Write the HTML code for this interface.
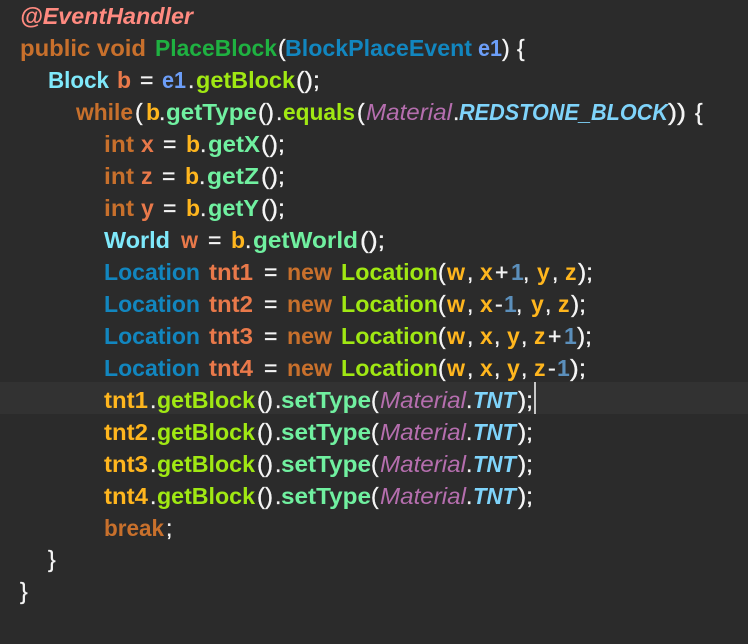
<!DOCTYPE html>
<html lang="en">
<head>
<meta charset="utf-8">
<title>Code</title>
<style>
html,body{margin:0;padding:0;background:#2b2b2b;width:748px;height:644px;overflow:hidden}
svg{display:block}
text{font-family:"Liberation Sans",sans-serif;font-size:23px;font-weight:700;white-space:pre}
.p{font-weight:400;fill:#f4f4f4;stroke:#f4f4f4;stroke-width:.35}
.k{fill:#c8702c}
.a{fill:#ff8a80;font-style:italic}
.f{fill:#1fb141}
.t{fill:#1286bf}
.e{fill:#6c9ef8}
.c{fill:#7fe9fb}
.v{fill:#e9794a}
.y{fill:#ffb61e}
.g{fill:#a0e813}
.m{fill:#70f0a0}
.i{fill:#b56eae;font-style:italic;font-weight:400}
.s{fill:#7fd4fb;font-style:italic}
.n{fill:#5b8fbb}
</style>
</head>
<body>
<svg width="748" height="644" viewBox="0 0 748 644" xmlns="http://www.w3.org/2000/svg">
<rect width="748" height="644" fill="#2b2b2b"/>
<rect x="0" y="382" width="748" height="32" fill="#323232"/>
<rect x="534" y="382" width="2" height="32" fill="#c8c8c8"/>
<g transform="translate(0,1)">
<text x="20" y="23" class="a" textLength="173" lengthAdjust="spacingAndGlyphs">@EventHandler</text>

<text x="20" y="55" class="k" textLength="126" lengthAdjust="spacingAndGlyphs">public void</text>
<text x="155" y="55" class="f" textLength="122" lengthAdjust="spacingAndGlyphs">PlaceBlock</text>
<text x="278" y="55" class="p">(</text>
<text x="285" y="55" class="t" textLength="187" lengthAdjust="spacingAndGlyphs">BlockPlaceEvent</text>
<text x="478" y="55" class="e" textLength="24" lengthAdjust="spacingAndGlyphs">e1</text>
<text x="502" y="55" class="p">)</text>
<text x="517" y="55" class="p">{</text>

<text x="48" y="87" class="c" textLength="61" lengthAdjust="spacingAndGlyphs">Block</text>
<text x="117" y="87" class="v">b</text>
<text x="140" y="87" class="p">=</text>
<text x="162" y="87" class="e" textLength="24" lengthAdjust="spacingAndGlyphs">e1</text>
<text x="188" y="87" class="p">.</text>
<text x="196" y="87" class="g" textLength="99" lengthAdjust="spacingAndGlyphs">getBlock</text>
<text x="296" y="87" class="p" textLength="24" lengthAdjust="spacingAndGlyphs">();</text>

<text x="76" y="119" class="k" textLength="57" lengthAdjust="spacingAndGlyphs">while</text>
<text x="135" y="119" class="p">(</text>
<text x="146" y="119" class="y">b</text>
<text x="159" y="119" class="p">.</text>
<text x="166" y="119" class="m" textLength="91" lengthAdjust="spacingAndGlyphs">getType</text>
<text x="258" y="119" class="p" textLength="16" lengthAdjust="spacingAndGlyphs">()</text>
<text x="276" y="119" class="p">.</text>
<text x="283" y="119" class="g" textLength="72" lengthAdjust="spacingAndGlyphs">equals</text>
<text x="357" y="119" class="p">(</text>
<text x="366" y="119" class="i" textLength="86" lengthAdjust="spacingAndGlyphs">Material</text>
<text x="453" y="119" class="p">.</text>
<text x="459" y="119" class="s" textLength="209" lengthAdjust="spacingAndGlyphs">REDSTONE_BLOCK</text>
<text x="668" y="119" class="p" textLength="18" lengthAdjust="spacingAndGlyphs">))</text>
<text x="695" y="119" class="p">{</text>

<text x="104" y="151" class="k" textLength="30" lengthAdjust="spacingAndGlyphs">int</text>
<text x="141" y="151" class="v">x</text>
<text x="163" y="151" class="p">=</text>
<text x="186" y="151" class="y">b</text>
<text x="200" y="151" class="p">.</text>
<text x="208" y="151" class="m" textLength="52" lengthAdjust="spacingAndGlyphs">getX</text>
<text x="261" y="151" class="p" textLength="24" lengthAdjust="spacingAndGlyphs">();</text>

<text x="104" y="183" class="k" textLength="30" lengthAdjust="spacingAndGlyphs">int</text>
<text x="141" y="183" class="v">z</text>
<text x="162" y="183" class="p">=</text>
<text x="185" y="183" class="y">b</text>
<text x="199" y="183" class="p">.</text>
<text x="207" y="183" class="m" textLength="52" lengthAdjust="spacingAndGlyphs">getZ</text>
<text x="261" y="183" class="p" textLength="24" lengthAdjust="spacingAndGlyphs">();</text>

<text x="104" y="215" class="k" textLength="30" lengthAdjust="spacingAndGlyphs">int</text>
<text x="141" y="215" class="v">y</text>
<text x="163" y="215" class="p">=</text>
<text x="186" y="215" class="y">b</text>
<text x="200" y="215" class="p">.</text>
<text x="208" y="215" class="m" textLength="51" lengthAdjust="spacingAndGlyphs">getY</text>
<text x="261" y="215" class="p" textLength="24" lengthAdjust="spacingAndGlyphs">();</text>

<text x="104" y="247" class="c" textLength="66" lengthAdjust="spacingAndGlyphs">World</text>
<text x="181" y="247" class="v" textLength="17" lengthAdjust="spacingAndGlyphs">w</text>
<text x="208" y="247" class="p">=</text>
<text x="231" y="247" class="y">b</text>
<text x="245" y="247" class="p">.</text>
<text x="253" y="247" class="m" textLength="105" lengthAdjust="spacingAndGlyphs">getWorld</text>
<text x="360" y="247" class="p" textLength="25" lengthAdjust="spacingAndGlyphs">();</text>

<text x="104" y="279" class="t" textLength="96" lengthAdjust="spacingAndGlyphs">Location</text>
<text x="209" y="279" class="v" textLength="44" lengthAdjust="spacingAndGlyphs">tnt1</text>
<text x="264" y="279" class="p">=</text>
<text x="287" y="279" class="k" textLength="45" lengthAdjust="spacingAndGlyphs">new</text>
<text x="341" y="279" class="g" textLength="97" lengthAdjust="spacingAndGlyphs">Location</text>
<text x="438" y="279" class="p">(</text>
<text x="447" y="279" class="y" textLength="18" lengthAdjust="spacingAndGlyphs">w</text>
<text x="467" y="279" class="p">,</text>
<text x="480" y="279" class="y">x</text>
<text x="495" y="279" class="p">+</text>
<text x="511" y="279" class="n">1</text>
<text x="523" y="279" class="p">,</text>
<text x="537" y="279" class="y">y</text>
<text x="552" y="279" class="p">,</text>
<text x="565" y="279" class="y">z</text>
<text x="578" y="279" class="p" textLength="15" lengthAdjust="spacingAndGlyphs">);</text>

<text x="104" y="311" class="t" textLength="96" lengthAdjust="spacingAndGlyphs">Location</text>
<text x="209" y="311" class="v" textLength="44" lengthAdjust="spacingAndGlyphs">tnt2</text>
<text x="264" y="311" class="p">=</text>
<text x="287" y="311" class="k" textLength="45" lengthAdjust="spacingAndGlyphs">new</text>
<text x="341" y="311" class="g" textLength="97" lengthAdjust="spacingAndGlyphs">Location</text>
<text x="438" y="311" class="p">(</text>
<text x="447" y="311" class="y" textLength="18" lengthAdjust="spacingAndGlyphs">w</text>
<text x="467" y="311" class="p">,</text>
<text x="480" y="311" class="y">x</text>
<text x="495" y="311" class="p">-</text>
<text x="504" y="311" class="n">1</text>
<text x="516" y="311" class="p">,</text>
<text x="531" y="311" class="y">y</text>
<text x="545" y="311" class="p">,</text>
<text x="558" y="311" class="y">z</text>
<text x="571" y="311" class="p" textLength="15" lengthAdjust="spacingAndGlyphs">);</text>

<text x="104" y="343" class="t" textLength="96" lengthAdjust="spacingAndGlyphs">Location</text>
<text x="209" y="343" class="v" textLength="44" lengthAdjust="spacingAndGlyphs">tnt3</text>
<text x="264" y="343" class="p">=</text>
<text x="287" y="343" class="k" textLength="45" lengthAdjust="spacingAndGlyphs">new</text>
<text x="341" y="343" class="g" textLength="97" lengthAdjust="spacingAndGlyphs">Location</text>
<text x="438" y="343" class="p">(</text>
<text x="447" y="343" class="y" textLength="18" lengthAdjust="spacingAndGlyphs">w</text>
<text x="467" y="343" class="p">,</text>
<text x="480" y="343" class="y">x</text>
<text x="494" y="343" class="p">,</text>
<text x="507" y="343" class="y">y</text>
<text x="521" y="343" class="p">,</text>
<text x="534" y="343" class="y">z</text>
<text x="548" y="343" class="p">+</text>
<text x="564" y="343" class="n">1</text>
<text x="577" y="343" class="p" textLength="15" lengthAdjust="spacingAndGlyphs">);</text>

<text x="104" y="375" class="t" textLength="96" lengthAdjust="spacingAndGlyphs">Location</text>
<text x="209" y="375" class="v" textLength="44" lengthAdjust="spacingAndGlyphs">tnt4</text>
<text x="264" y="375" class="p">=</text>
<text x="287" y="375" class="k" textLength="45" lengthAdjust="spacingAndGlyphs">new</text>
<text x="341" y="375" class="g" textLength="97" lengthAdjust="spacingAndGlyphs">Location</text>
<text x="438" y="375" class="p">(</text>
<text x="447" y="375" class="y" textLength="18" lengthAdjust="spacingAndGlyphs">w</text>
<text x="467" y="375" class="p">,</text>
<text x="480" y="375" class="y">x</text>
<text x="494" y="375" class="p">,</text>
<text x="507" y="375" class="y">y</text>
<text x="521" y="375" class="p">,</text>
<text x="534" y="375" class="y">z</text>
<text x="548" y="375" class="p">-</text>
<text x="557" y="375" class="n">1</text>
<text x="570" y="375" class="p" textLength="16" lengthAdjust="spacingAndGlyphs">);</text>

<text x="104" y="407" class="y" textLength="44" lengthAdjust="spacingAndGlyphs">tnt1</text>
<text x="150" y="407" class="p">.</text>
<text x="157" y="407" class="g" textLength="98" lengthAdjust="spacingAndGlyphs">getBlock</text>
<text x="257" y="407" class="p" textLength="16" lengthAdjust="spacingAndGlyphs">()</text>
<text x="275" y="407" class="p">.</text>
<text x="281" y="407" class="m" textLength="90" lengthAdjust="spacingAndGlyphs">setType</text>
<text x="371" y="407" class="p">(</text>
<text x="380" y="407" class="i" textLength="86" lengthAdjust="spacingAndGlyphs">Material</text>
<text x="466" y="407" class="p">.</text>
<text x="473" y="407" class="s" textLength="43" lengthAdjust="spacingAndGlyphs">TNT</text>
<text x="518" y="407" class="p" textLength="15" lengthAdjust="spacingAndGlyphs">);</text>

<text x="104" y="439" class="y" textLength="44" lengthAdjust="spacingAndGlyphs">tnt2</text>
<text x="150" y="439" class="p">.</text>
<text x="157" y="439" class="g" textLength="98" lengthAdjust="spacingAndGlyphs">getBlock</text>
<text x="257" y="439" class="p" textLength="16" lengthAdjust="spacingAndGlyphs">()</text>
<text x="275" y="439" class="p">.</text>
<text x="281" y="439" class="m" textLength="90" lengthAdjust="spacingAndGlyphs">setType</text>
<text x="371" y="439" class="p">(</text>
<text x="380" y="439" class="i" textLength="86" lengthAdjust="spacingAndGlyphs">Material</text>
<text x="466" y="439" class="p">.</text>
<text x="473" y="439" class="s" textLength="43" lengthAdjust="spacingAndGlyphs">TNT</text>
<text x="518" y="439" class="p" textLength="15" lengthAdjust="spacingAndGlyphs">);</text>

<text x="104" y="471" class="y" textLength="44" lengthAdjust="spacingAndGlyphs">tnt3</text>
<text x="150" y="471" class="p">.</text>
<text x="157" y="471" class="g" textLength="98" lengthAdjust="spacingAndGlyphs">getBlock</text>
<text x="257" y="471" class="p" textLength="16" lengthAdjust="spacingAndGlyphs">()</text>
<text x="275" y="471" class="p">.</text>
<text x="281" y="471" class="m" textLength="90" lengthAdjust="spacingAndGlyphs">setType</text>
<text x="371" y="471" class="p">(</text>
<text x="380" y="471" class="i" textLength="86" lengthAdjust="spacingAndGlyphs">Material</text>
<text x="466" y="471" class="p">.</text>
<text x="473" y="471" class="s" textLength="43" lengthAdjust="spacingAndGlyphs">TNT</text>
<text x="518" y="471" class="p" textLength="15" lengthAdjust="spacingAndGlyphs">);</text>

<text x="104" y="503" class="y" textLength="44" lengthAdjust="spacingAndGlyphs">tnt4</text>
<text x="150" y="503" class="p">.</text>
<text x="157" y="503" class="g" textLength="98" lengthAdjust="spacingAndGlyphs">getBlock</text>
<text x="257" y="503" class="p" textLength="16" lengthAdjust="spacingAndGlyphs">()</text>
<text x="275" y="503" class="p">.</text>
<text x="281" y="503" class="m" textLength="90" lengthAdjust="spacingAndGlyphs">setType</text>
<text x="371" y="503" class="p">(</text>
<text x="380" y="503" class="i" textLength="86" lengthAdjust="spacingAndGlyphs">Material</text>
<text x="466" y="503" class="p">.</text>
<text x="473" y="503" class="s" textLength="43" lengthAdjust="spacingAndGlyphs">TNT</text>
<text x="518" y="503" class="p" textLength="15" lengthAdjust="spacingAndGlyphs">);</text>

<text x="104" y="535" class="k" textLength="60" lengthAdjust="spacingAndGlyphs">break</text>
<text x="166" y="535" class="p">;</text>

<text x="48" y="566" class="p">}</text>
<text x="20" y="598" class="p">}</text>
</g>
</svg>
</body>
</html>
